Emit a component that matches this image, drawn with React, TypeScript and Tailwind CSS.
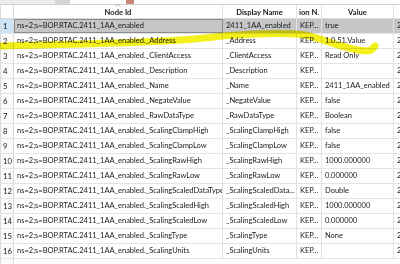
import React from "react";

const rows: [string, string, string, string][] = [
  ["", "2411_1AA_enabled", "KEP...", "true"],
  ["._Address", "_Address", "KEP...", "1.0.51.Value"],
  ["._ClientAccess", "_ClientAccess", "KEP...", "Read Only"],
  ["._Description", "_Description", "KEP...", ""],
  ["._Name", "_Name", "KEP...", "2411_1AA_enabled"],
  ["._NegateValue", "_NegateValue", "KEP...", "false"],
  ["._RawDataType", "_RawDataType", "KEP...", "Boolean"],
  ["._ScalingClampHigh", "_ScalingClampHigh", "KEP...", "false"],
  ["._ScalingClampLow", "_ScalingClampLow", "KEP...", "false"],
  ["._ScalingRawHigh", "_ScalingRawHigh", "KEP...", "1000.000000"],
  ["._ScalingRawLow", "_ScalingRawLow", "KEP...", "0.000000"],
  ["._ScalingScaledDataType", "_ScalingScaledData...", "KEP...", "Double"],
  ["._ScalingScaledHigh", "_ScalingScaledHigh", "KEP...", "1000.000000"],
  ["._ScalingScaledLow", "_ScalingScaledLow", "KEP...", "0.000000"],
  ["._ScalingType", "_ScalingType", "KEP...", "None"],
  ["._ScalingUnits", "_ScalingUnits", "KEP...", ""],
];

const cols = "grid grid-cols-[14px_209px_74px_25px_72px_6px]";

export default function App() {
  return (
    <div
      className="relative w-[400px] h-[264px] overflow-hidden bg-white text-[#1a1a1a]"
      style={{ fontFamily: "Lato, 'Noto Sans', sans-serif" }}
    >
      {/* top strip */}
      <div className="flex h-[5px] border-b border-[#cfcfcf]">
        <div className="w-[55px] bg-[#ececec]" />
        <div className="w-[15px] bg-[#d6d6d6]" />
        <div className="w-[56px] bg-white" />
        <div className="w-[8px] bg-[#c9877a]" />
        <div className="flex-1 bg-white" />
      </div>

      {/* header */}
      <div className={`${cols} h-[14px] border-b border-[#d9d9d9] text-[7.6px] font-bold leading-[14px]`}>
        <div className="border-r border-l border-[#d9d9d9]" />
        <div className="relative border-r border-[#e2e2e2] text-center">
          <svg className="absolute left-[101px] top-[-2px]" width="6" height="4" viewBox="0 0 6 4">
            <path d="M0.5 3.5 L3 1 L5.5 3.5" fill="none" stroke="#9a9a9a" strokeWidth="0.8" />
          </svg>
          Node Id
        </div>
        <div className="border-r border-[#e2e2e2] text-center">Display Name</div>
        <div className="border-r border-[#e2e2e2] pl-[2px] overflow-hidden whitespace-nowrap">ion N.</div>
        <div className="border-r border-[#e2e2e2] text-center">Value</div>
        <div />
      </div>

      {/* rows */}
      {rows.map((r, i) => {
        const sel = i === 0;
        const cell = `border-r border-[#e2e2e2] overflow-hidden whitespace-nowrap pl-[3px] ${sel ? "bg-[#c6c6c6]" : ""}`;
        return (
          <div
            key={i}
            className={`${cols} h-[15px] border-b border-[#e4e4e4] text-[7.5px] leading-[14px]`}
          >
            <div
              className={`border-r border-l border-[#d9d9d9] pl-[2px] text-[7.8px] ${sel ? "bg-[#cce4f7]" : "bg-[#fbfbfb]"}`}
            >
              {i + 1}
            </div>
            <div className={`${cell} pl-[2px] ${sel ? "outline outline-1 outline-[#8c8c8c] -outline-offset-1" : ""}`}>
              ns=2;s=BOP.RTAC.2411_1AA_enabled{r[0]}
            </div>
            <div className={cell}>{r[1]}</div>
            <div className={cell}>{r[2]}</div>
            <div className={cell}>{r[3]}</div>
            <div className={`overflow-hidden whitespace-nowrap pl-[3px] ${sel ? "bg-[#c6c6c6]" : ""}`}>2</div>
          </div>
        );
      })}
      <div className="flex h-[5px]">
        <div className="w-[14px] border-r border-l border-[#d9d9d9] bg-[#fbfbfb]" />
      </div>

      {/* yellow marker */}
      <svg
        className="pointer-events-none absolute left-0 top-0 mix-blend-multiply"
        width="400"
        height="264"
        viewBox="0 0 400 264"
      >
        <path
          d="M0 46 C 50 44, 140 44, 195 39 C 235 34, 280 32, 305 35 C 325 39, 345 50, 366 51 C 370 51, 373 49, 375 46"
          fill="none"
          stroke="#f4f01c"
          strokeWidth="7"
          strokeLinecap="round"
        />
      </svg>
    </div>
  );
}
